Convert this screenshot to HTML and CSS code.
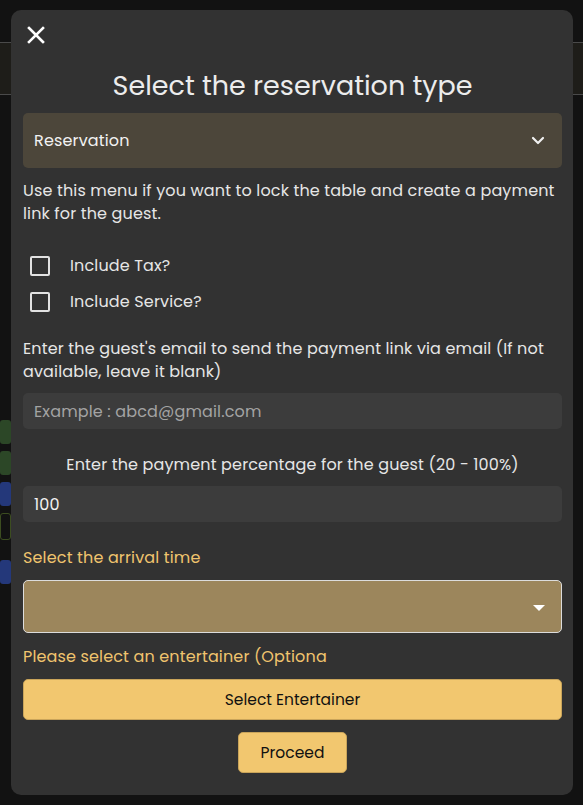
FILE: index.html
```html
<!DOCTYPE html>
<html>
<head>
<meta charset="utf-8">
<link rel="stylesheet" href="styles.css">
</head>
<body>
<div class="app">
  <div class="topbar"></div>
  <div class="side">
    <div class="tile green"></div>
    <div class="tile green"></div>
    <div class="tile blue"></div>
    <div class="tile outline"></div>
    <div class="tile blue spaced"></div>
  </div>
</div>
<div class="modal">
  <button class="close" aria-label="close">
    <svg width="18" height="18" viewBox="0 0 18 18"><path d="M2 2 L16 16 M16 2 L2 16" stroke="#fff" stroke-width="2.6" stroke-linecap="square"/></svg>
  </button>
  <h1 class="title">Select the reservation type</h1>
  <div class="type-select">
    <span>Reservation</span>
    <svg width="14" height="10" viewBox="0 0 14 10"><path d="M2 2 L7 7 L12 2" fill="none" stroke="#f0f0f0" stroke-width="2.2" stroke-linecap="round" stroke-linejoin="round"/></svg>
  </div>
  <p class="desc">Use this menu if you want to lock the table and create a payment link for the guest.</p>
  <div class="checks">
    <label class="check"><span class="box"></span>Include Tax?</label>
    <label class="check"><span class="box"></span>Include Service?</label>
  </div>
  <p class="desc email-desc">Enter the guest's email to send the payment link via email (If not available, leave it blank)</p>
  <div class="field placeholder">Example : abcd@gmail.com</div>
  <p class="center-label">Enter the payment percentage for the guest (20 - 100%)</p>
  <div class="field">100</div>
  <p class="gold-label">Select the arrival time</p>
  <div class="time-select">
    <svg width="12" height="7" viewBox="0 0 12 7"><path d="M0 0 L12 0 L6 6 Z" fill="#fff"/></svg>
  </div>
  <p class="gold-label ent">Please select an entertainer (Optiona</p>
  <button class="btn wide">Select Entertainer</button>
  <div class="proceed-row"><button class="btn proceed">Proceed</button></div>
</div>
</body>
</html>
```
FILE: styles.css
```css
* { box-sizing: border-box; }
html, body { margin: 0; height: 100%; }
body {
  background: #121212;
  font-family: "Poppins", "DejaVu Sans", sans-serif;
  color: #e8e8e8;
  overflow: hidden;
}
.app { height: 805px; overflow: hidden; }
.topbar {
  margin-top: 42px;
  height: 53px;
  background: #1e1d19;
  border-top: 1px solid #4a4a4a;
  border-bottom: 1px solid #4a4a4a;
}
.side {
  margin-top: 325px;
  width: 11px;
  display: flex;
  flex-direction: column;
  gap: 7px;
}
.tile { height: 24px; border-radius: 3px; }
.tile.green { background: #2c4727; }
.tile.blue { background: #24387a; }
.tile.outline { border: 1px solid #3c4d20; height: 27px; }
.tile.spaced { margin-top: 13px; }

.modal {
  position: fixed;
  left: 11px;
  top: 10px;
  width: 562px;
  height: 785px;
  background: #323232;
  border-radius: 10px;
  padding: 12px 11px 0 12px;
  display: flex;
  flex-direction: column;
}
.close {
  background: none;
  border: 0;
  padding: 0;
  width: 18px;
  height: 18px;
  margin-left: 4px;
  margin-top: 4px;
  display: block;
  flex: none;
}
.title {
  margin: 26px 0 0;
  text-align: center;
  font-weight: 400;
  font-size: 27px;
  line-height: 32px;
  color: #ececec;
}
.type-select {
  margin-top: 11px;
  height: 55px;
  flex: none;
  background: #4c463a;
  border-radius: 5px;
  display: flex;
  align-items: center;
  justify-content: space-between;
  padding: 0 17px 0 11px;
  font-size: 16px;
  letter-spacing: 0.15px;
  color: #f2f2f2;
}
.desc {
  margin: 11px 0 0;
  font-size: 16px;
  letter-spacing: 0.15px;
  line-height: 23px;
  color: #e6e6e6;
}
.checks {
  margin-top: 31px;
  display: flex;
  flex-direction: column;
  gap: 16px;
}
.check {
  display: flex;
  align-items: center;
  font-size: 16px;
  letter-spacing: 0.15px;
  line-height: 20px;
  color: #e6e6e6;
}
.box {
  width: 20px;
  height: 20px;
  border: 2px solid #e2e2e2;
  border-radius: 2px;
  margin: 0 20px 0 7px;
}
.email-desc { margin-top: 24.5px; }
.field {
  margin-top: 10.5px;
  height: 36px;
  flex: none;
  background: #3c3c3c;
  border-radius: 5px;
  display: flex;
  align-items: center;
  padding: 0 11px;
  font-size: 16px;
  letter-spacing: 0.15px;
  color: #f2f2f2;
}
.field.placeholder { color: #a3a3a3; }
.center-label {
  margin: 23.5px 0 0;
  text-align: center;
  font-size: 16px;
  letter-spacing: 0.15px;
  line-height: 23px;
  color: #e6e6e6;
}
.gold-label {
  margin: 23.5px 0 0;
  font-size: 16px;
  letter-spacing: 0.15px;
  line-height: 23px;
  color: #f0c46e;
}
.time-select {
  margin-top: 11.5px;
  height: 53px;
  flex: none;
  background: #9c865c;
  border: 1.5px solid #dcdcdc;
  border-radius: 5px;
  display: flex;
  align-items: center;
  justify-content: flex-end;
  padding: 4px 16px 0 0;
}
.gold-label.ent { margin-top: 11.5px; }
.btn {
  font-family: inherit;
  font-size: 15.5px;
  color: #111;
  background: #f2c76f;
  border: 1px solid #c9a45a;
  border-radius: 5px;
}
.btn.wide {
  margin-top: 11.5px;
  height: 41px;
  width: 100%;
  flex: none;
}
.proceed-row {
  margin-top: 12px;
  display: flex;
  justify-content: center;
}
.btn.proceed {
  width: 109px;
  height: 41px;
}
```
